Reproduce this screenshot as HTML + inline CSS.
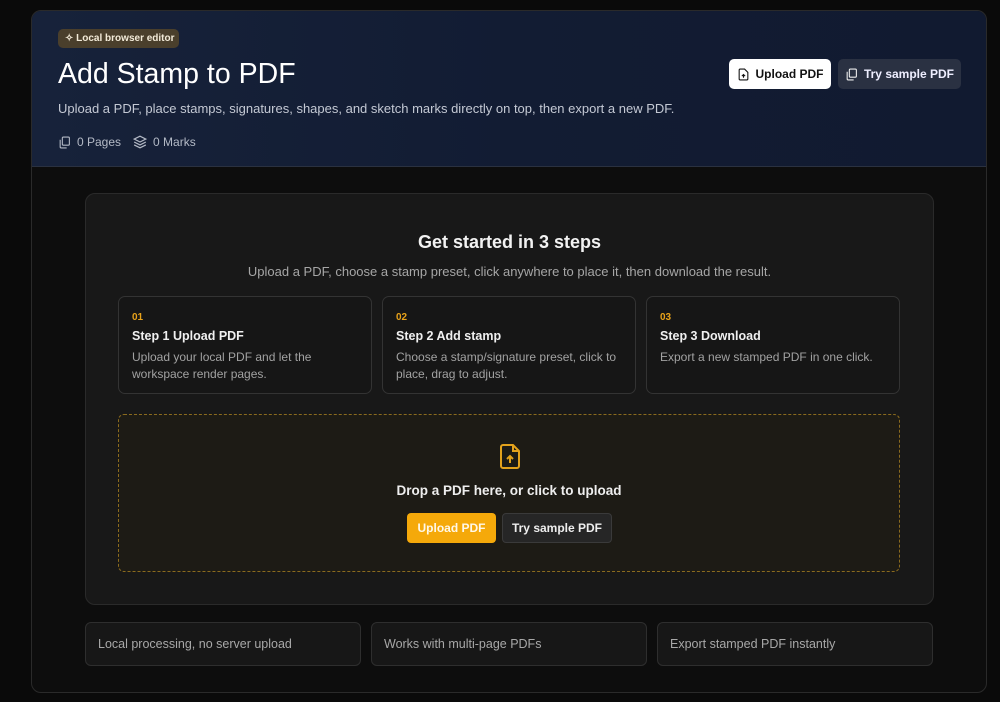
<!DOCTYPE html>
<html><head><meta charset="utf-8"><style>
*{box-sizing:border-box;margin:0;padding:0}
body{width:1000px;height:702px;background:#0a0a0a;font-family:"Liberation Sans",sans-serif;overflow:hidden;position:relative;color:#fff}
.wrap{position:absolute;left:31px;top:10px;width:956px;height:683px;border:1px solid #2a2a2a;border-radius:10px;background:#0d0d0d;overflow:hidden}
.hdr{position:absolute;left:0;top:0;width:100%;height:156px;background:linear-gradient(90deg,#17223a,#121c33 50%,#111a30);border-bottom:1px solid #2a3140}
.badge{position:absolute;left:26px;top:18px;height:19px;width:121px;background:#4a3f2c;border-radius:5px;font-size:10px;font-weight:bold;color:#f2ead8;line-height:19px;padding-left:7px;white-space:nowrap}
h1{position:absolute;left:26px;top:47px;font-size:28.5px;font-weight:normal;color:#fff;white-space:nowrap}
.sub{position:absolute;left:26px;top:90px;font-size:13px;color:#c4c9d4;white-space:nowrap}
.meta{position:absolute;left:26px;top:124px;font-size:12px;color:#b4bac6;display:flex;align-items:center;gap:6px}
.btn1{position:absolute;left:697px;top:48px;width:102px;height:30px;background:#fff;border-radius:5px;color:#111;font-size:12px;font-weight:bold;display:flex;align-items:center;justify-content:center;gap:6px;white-space:nowrap}
.btn2{position:absolute;left:806px;top:48px;width:123px;height:30px;background:#2a3142;border-radius:5px;color:#eef;font-size:12px;font-weight:bold;display:flex;align-items:center;justify-content:center;gap:6px;white-space:nowrap}
.card{position:absolute;width:849px;height:412px;background:#181818;border:1px solid #2a2a2a;border-radius:10px}
.card h2{position:absolute;width:100%;text-align:center;top:38px;font-size:18px;font-weight:bold;color:#f2f2f2}
.card .s{position:absolute;width:100%;text-align:center;top:70px;font-size:13px;color:#a6a6a6}
.step{position:absolute;top:102px;width:254px;height:98px;border:1px solid #333;border-radius:7px;background:#161616;padding:15px 13px}
.step .n{font-size:10px;font-weight:bold;color:#e8a21a}
.step .t{font-size:12.5px;font-weight:bold;color:#f0f0f0;margin-top:6px}
.step .d{font-size:12px;color:#a2a2a2;margin-top:6px;line-height:17px}
.drop{position:absolute;left:32px;top:220px;width:782px;height:158px;border:1.5px dashed #8a6a1e;border-radius:6px;background:#1d1b15}
.drop .tx{position:absolute;width:100%;text-align:center;top:68px;font-size:13.5px;font-weight:bold;color:#eee}
.ub{position:absolute;left:288px;top:98px;width:89px;height:30px;background:#f5a90a;border-radius:4px;color:#fff8e8;font-size:12px;font-weight:bold;text-align:center;line-height:30px}
.tb{position:absolute;left:383px;top:98px;width:110px;height:30px;background:#262626;border:1px solid #3a3a3a;border-radius:4px;color:#eee;font-size:12px;font-weight:bold;text-align:center;line-height:28px}
.f{position:absolute;top:622px;width:276px;height:44px;background:#171717;border:1px solid #2e2e2e;border-radius:6px;font-size:12.5px;color:#a8a8a8;padding-left:12px;line-height:42px}
</style></head><body>
<div class="wrap">
 <div class="hdr">
  <div class="badge">✧ Local browser editor</div>
  <h1>Add Stamp to PDF</h1>
  <div class="sub">Upload a PDF, place stamps, signatures, shapes, and sketch marks directly on top, then export a new PDF.</div>
  <div class="meta">
   <svg width="13" height="13" viewBox="0 0 24 24" fill="none" stroke="#b4bac6" stroke-width="2"><rect x="8" y="2" width="13" height="15" rx="2"/><path d="M4 7v13a2 2 0 0 0 2 2h10"/></svg><span>0 Pages</span>
   <svg style="margin-left:6px" width="14" height="14" viewBox="0 0 24 24" fill="none" stroke="#b4bac6" stroke-width="2"><path d="M12 2 2 7l10 5 10-5z"/><path d="m2 12 10 5 10-5"/><path d="m2 17 10 5 10-5"/></svg><span>0 Marks</span>
  </div>
  <div class="btn1"><svg width="13" height="13" viewBox="0 0 24 24" fill="none" stroke="#111" stroke-width="2"><path d="M14 2H6a2 2 0 0 0-2 2v16a2 2 0 0 0 2 2h12a2 2 0 0 0 2-2V8z"/><path d="M12 18v-6M9 15l3-3 3 3"/></svg>Upload PDF</div>
  <div class="btn2"><svg width="13" height="13" viewBox="0 0 24 24" fill="none" stroke="#eee" stroke-width="2"><rect x="8" y="2" width="13" height="15" rx="2"/><path d="M4 7v13a2 2 0 0 0 2 2h10"/></svg>Try sample PDF</div>
 </div>
</div>
<div class="card" style="left:85px;top:193px">
 <h2>Get started in 3 steps</h2>
 <div class="s">Upload a PDF, choose a stamp preset, click anywhere to place it, then download the result.</div>
 <div class="step" style="left:32px"><div class="n">01</div><div class="t">Step 1 Upload PDF</div><div class="d">Upload your local PDF and let the workspace render pages.</div></div>
 <div class="step" style="left:296px"><div class="n">02</div><div class="t">Step 2 Add stamp</div><div class="d">Choose a stamp/signature preset, click to place, drag to adjust.</div></div>
 <div class="step" style="left:560px"><div class="n">03</div><div class="t">Step 3 Download</div><div class="d">Export a new stamped PDF in one click.</div></div>
 <div class="drop">
  <svg style="position:absolute;left:379px;top:28px" width="24" height="27" viewBox="0 0 24 27" fill="none" stroke="#e3a21c" stroke-width="2"><path d="M15 2H5a2 2 0 0 0-2 2v19a2 2 0 0 0 2 2h14a2 2 0 0 0 2-2V8z"/><path d="M15 2v6h6"/><path d="M12 20v-7M9 16l3-3 3 3"/></svg>
  <div class="tx">Drop a PDF here, or click to upload</div>
  <div class="ub">Upload PDF</div>
  <div class="tb">Try sample PDF</div>
 </div>
</div>
<div class="f" style="left:85px">Local processing, no server upload</div>
<div class="f" style="left:371px">Works with multi-page PDFs</div>
<div class="f" style="left:657px">Export stamped PDF instantly</div>
</body></html>
